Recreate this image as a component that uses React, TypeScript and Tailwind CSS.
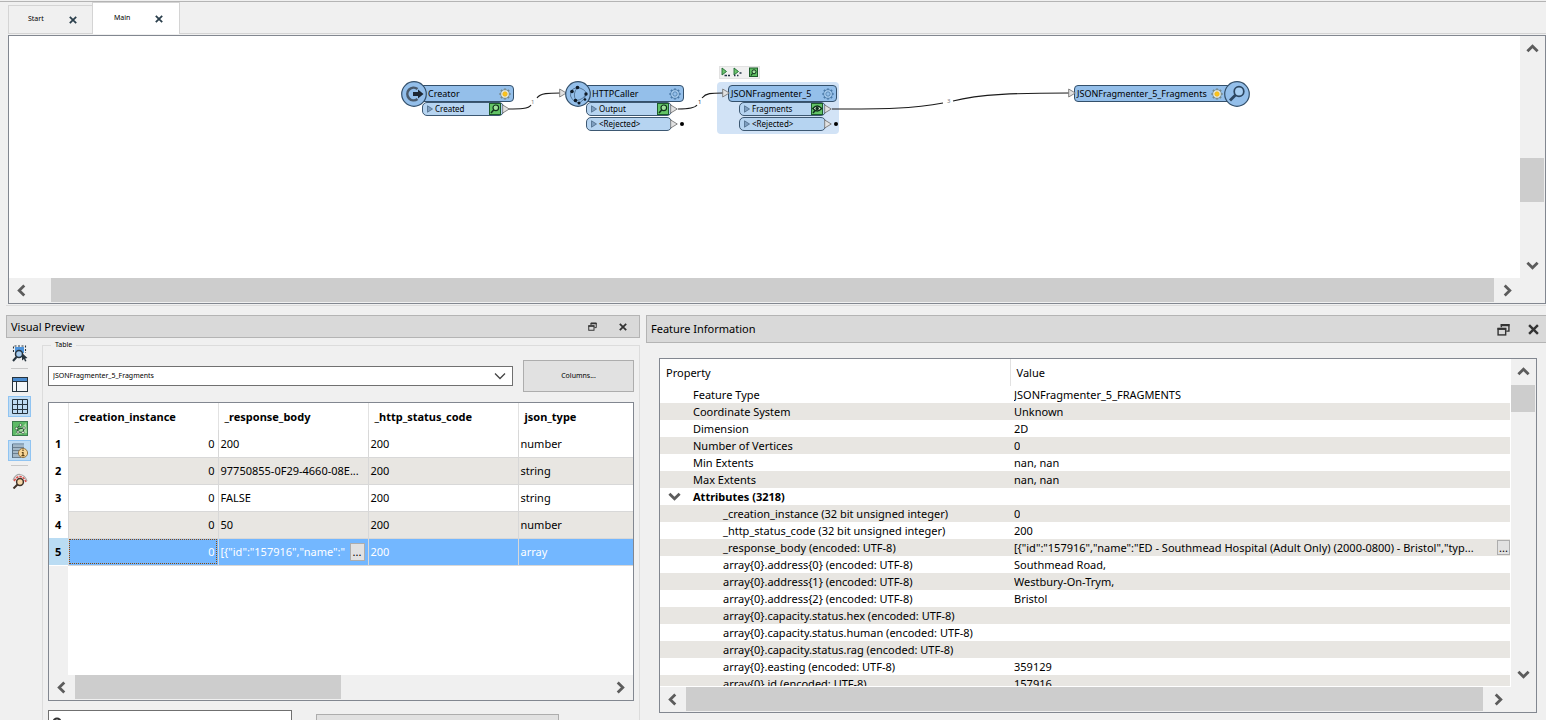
import React, { useState } from 'react';
import clsx from 'clsx';

type Direction = 'up' | 'down' | 'left' | 'right';

const chevrons: Record<Direction, string> = {
  up: 'M1.5 10 L7 4.5 L12.5 10',
  down: 'M1.5 4 L7 9.5 L12.5 4',
  left: 'M10 1.5 L4.5 7 L10 12.5',
  right: 'M4 1.5 L9.5 7 L4 12.5',
};

const Chevron: React.FC<{ direction: Direction }> = ({ direction }) => (
  <svg viewBox="0 0 14 14" className="size-[13px]" fill="none" stroke="#5c5c5c" strokeWidth="3">
    <path d={chevrons[direction]} />
  </svg>
);

const ScrollButton: React.FC<{ direction: Direction }> = ({ direction }) => (
  <button
    type="button"
    aria-label={`Scroll ${direction}`}
    className="flex size-[25px] shrink-0 items-center justify-center"
  >
    <Chevron direction={direction} />
  </button>
);

type ScrollbarProps = {
  vertical?: boolean;
  before: number;
  thumb: number;
  after: number;
};

const Scrollbar: React.FC<ScrollbarProps> = ({ vertical, before, thumb, after }) => (
  <div className={clsx('flex shrink-0 items-start bg-[#f0f0f0]', vertical ? 'w-[25px] flex-col' : 'h-[25px]')}>
    <ScrollButton direction={vertical ? 'up' : 'left'} />
    <div style={{ flexGrow: before }} />
    <div className={clsx('bg-[#cdcdcd]', vertical ? 'w-[24px]' : 'h-[24px]')} style={{ flexGrow: thumb }} />
    <div style={{ flexGrow: after }} />
    <ScrollButton direction={vertical ? 'down' : 'right'} />
  </div>
);

const CloseIcon: React.FC<{ className: string; color?: string }> = ({ className, color = '#333' }) => (
  <svg viewBox="0 0 10 10" className={className} stroke={color} strokeWidth="2.2" fill="none">
    <path d="M1 1 L9 9 M9 1 L1 9" />
  </svg>
);

const RestoreIcon: React.FC<{ className: string }> = ({ className }) => (
  <svg viewBox="0 0 12 12" className={className} stroke="#333" fill="none">
    <path d="M4 4 V1.5 H11 V7.5 H8.5" strokeWidth="1.3" />
    <path d="M3.5 2 H11.5" strokeWidth="2" />
    <rect x="1" y="5" width="7" height="6" strokeWidth="1.3" />
    <path d="M0.5 5.5 H8.5" strokeWidth="1.8" />
  </svg>
);

/* ---------- workspace canvas ---------- */

const Gear: React.FC<{ lit?: boolean }> = ({ lit }) => (
  <svg viewBox="0 0 12 12" className="size-3 shrink-0" fill="none">
    <path
      d="M6 0.4 V11.6 M0.4 6 H11.6 M2 2 L10 10 M10 2 L2 10"
      stroke={lit ? '#74888c' : '#4a7aa8'}
      strokeWidth="2.2"
    />
    <circle cx="6" cy="6" r="4.3" fill={lit ? '#e6eadf' : '#add0f1'} stroke={lit ? '#74888c' : '#4a7aa8'} strokeWidth="0.8" />
    <circle cx="6" cy="6" r="2.2" fill={lit ? '#fcc419' : '#94c0ea'} stroke={lit ? '#edb41c' : '#4a7aa8'} strokeWidth="0.8" />
  </svg>
);

const CacheIcon: React.FC<{ viewed?: boolean }> = ({ viewed }) => (
  <svg viewBox="0 0 12 12" className="size-3 shrink-0" fill="none">
    <rect x="0.5" y="0.5" width="11" height="11" fill="#63c466" stroke="#1d5b2b" />
    {viewed ? (
      <>
        <path d="M1.8 5.5 Q6.2 0.5 10.6 5.5 Q6.2 10.5 1.8 5.5 Z" fill="#dff3d8" stroke="#10301c" strokeWidth="1.3" />
        <circle cx="6.2" cy="5.5" r="1.7" fill="#10301c" />
      </>
    ) : (
      <circle cx="6.8" cy="4.8" r="2.8" fill="#9fe29a" stroke="#10301c" strokeWidth="1.2" />
    )}
    <path d="M4.6 7 L2 10" stroke="#10301c" strokeWidth="1.5" />
  </svg>
);

const InputArrow: React.FC<{ className: string }> = ({ className }) => (
  <svg viewBox="0 0 8 10" className={clsx('h-[10px] w-2', className)}>
    <path d="M0.7 1 L7.3 5 L0.7 9 Z" fill="#e2e2e2" stroke="#777" strokeWidth="0.9" />
  </svg>
);

type PortProps = { name: string; cached?: boolean; viewed?: boolean; open?: boolean };

const Port: React.FC<PortProps> = ({ name, cached, viewed, open }) => (
  <div className="relative flex h-[14px] items-center gap-[2px] rounded-[5px] border border-[#3d5872] bg-[#b6d4f1] pr-[2px] pl-1 text-[8px]">
    <svg viewBox="0 0 6 8" className="h-2 w-[6px] shrink-0">
      <path d="M0.5 0.8 L5.5 4 L0.5 7.2 Z" fill="#7f9fc0" stroke="#4c6a88" strokeWidth="0.8" />
    </svg>
    <span className="grow whitespace-nowrap">{name}</span>
    {cached ? <CacheIcon viewed={viewed} /> : null}
    <InputArrow className="absolute top-px -right-[7px]" />
    {open ? <span className="absolute top-1 -right-[13px] size-1 rounded-full bg-black" /> : null}
  </div>
);

const Badge: React.FC<{ className: string; children: React.ReactNode }> = ({ className, children }) => (
  <svg viewBox="0 0 26 26" className={clsx('absolute -top-1 size-[26px]', className)} fill="none">
    <circle cx="13" cy="13" r="12.3" fill="#94bfea" stroke="#34506b" strokeWidth="1.2" />
    {children}
  </svg>
);

type NodeProps = {
  className: string;
  titleClass: string;
  name: string;
  lit?: boolean;
  badge?: React.ReactNode;
  children?: React.ReactNode;
};

const WorkspaceNode: React.FC<NodeProps> = ({ className, titleClass, name, lit, badge, children }) => (
  <div className={clsx('absolute top-[49px]', className)}>
    <div
      className={clsx(
        'flex h-[17px] items-center justify-between rounded-[4px] border border-[#34506b] bg-[#94bfea] text-[9px] whitespace-nowrap',
        titleClass,
      )}
    >
      {name}
      <Gear lit={lit} />
    </div>
    {badge}
    {children}
  </div>
);

const Wires = () => (
  <svg className="absolute top-0 left-0 h-[140px] w-[1260px]" fill="none" stroke="#1a1a1a" strokeWidth="1.1">
    <path d="M498 73 C510 73 520 73 522 69" />
    <path d="M528 62 C531 57 540 57 552 57" />
    <path d="M669 73 C680 73 686 72 688 69" />
    <path d="M693 62 C697 57 702 57 714 57" />
    <path d="M823 73 C870 73 905 73 934 67" />
    <path d="M944 65 C970 58 1010 57 1060 57" />
    <g fill="#333" stroke="none" fontSize="6">
      <text x="522" y="68" fill="#777">1</text>
      <text x="689" y="68">1</text>
      <text x="938" y="67" fill="#777">3</text>
    </g>
  </svg>
);

const Canvas = () => (
  <div className="relative grow overflow-hidden bg-white">
    <div className="absolute top-[46px] left-[708px] h-[52px] w-[122px] rounded-[4px] bg-[#d2e3f6]" />
    <Wires />

    <div className="absolute top-[30px] left-[710px] flex h-[13px] w-[41px] items-center border border-[#e2e2e2] bg-[#f0f0f0] px-px">
      <svg viewBox="0 0 37 11" className="h-[11px] w-[37px]">
        <path d="M1 1 L5.5 4.5 L1 8 Z M13 1 L17.5 4.5 L13 8 Z" fill="#6cc46c" stroke="#1f6b33" strokeWidth="0.9" />
        <path d="M3.5 8.5 H6 M7 8.5 H9 M13 8.5 H14.5 M18.5 6 H20.5 M16 8.5 H17.5" stroke="#234" strokeWidth="1.5" />
        <rect x="28.5" y="1" width="8" height="8.5" fill="#5fbf62" stroke="#1d5b2b" />
        <circle cx="33" cy="4.8" r="2" fill="#a5e3a1" stroke="#10301c" />
        <path d="M31.5 6.5 L30 8.5" stroke="#10301c" strokeWidth="1.2" />
      </svg>
    </div>

    <WorkspaceNode
      className="left-[405px] w-[100px]"
      titleClass="pr-[2px] pl-[13px]"
      name="Creator"
      lit
      badge={
        <Badge className="-left-[13px]">
          <path d="M16.5 8 A6.3 6.3 0 1 0 16.5 18" stroke="#4a5a6b" strokeWidth="2.6" />
          <path d="M12 11 H17 V8.5 L22.5 13 L17 17.5 V15 H12 Z" fill="#1d2733" />
        </Badge>
      }
    >
      <div className="ml-[8px] w-[82px]">
        <Port name="Created" cached />
      </div>
    </WorkspaceNode>

    <WorkspaceNode
      className="left-[569px] w-[106px]"
      titleClass="pr-[2px] pl-[13px]"
      name="HTTPCaller"
      badge={
        <>
          <InputArrow className="absolute top-[3px] -left-[19px]" />
          <Badge className="-left-[13px]">
            <g stroke="#3b5875" strokeWidth="0.7">
              <path d="M8 8 L12.5 6.5 Q20 8 21.5 12.5 Q20 19 14.5 22 Q8 21 5.5 15 Q5 10 8 8 Z" />
              <path d="M12.5 6.5 Q7 13 11 19.5 M11 19.5 Q18 19 21.5 12.5" />
            </g>
            <g fill="#0f1a26">
              <circle cx="12.5" cy="6.5" r="1.8" />
              <circle cx="7" cy="10.5" r="1.8" />
              <circle cx="21" cy="13" r="1.7" />
              <circle cx="10.5" cy="19.5" r="1.8" />
              <circle cx="14" cy="22" r="1.5" />
              <circle cx="20" cy="18.5" r="1.3" />
            </g>
          </Badge>
        </>
      }
    >
      <div className="ml-[8px] flex w-[86px] flex-col gap-px">
        <Port name="Output" cached />
        <Port name="<Rejected>" open />
      </div>
    </WorkspaceNode>

    <WorkspaceNode
      className="left-[719px] w-[109px]"
      titleClass="pr-[2px] pl-[2px]"
      name="JSONFragmenter_5"
      badge={<InputArrow className="absolute top-[3px] -left-[6px]" />}
    >
      <div className="ml-[11px] flex w-[87px] flex-col gap-px">
        <Port name="Fragments" cached viewed />
        <Port name="<Rejected>" open />
      </div>
    </WorkspaceNode>

    <WorkspaceNode
      className="left-[1065px] w-[163px]"
      titleClass="pr-[13px] pl-[2px]"
      name="JSONFragmenter_5_Fragments"
      lit
      badge={
        <>
          <InputArrow className="absolute top-[3px] -left-[6px]" />
          <Badge className="-right-[13px]">
            <circle cx="15" cy="10.5" r="4.8" fill="#a9cff2" stroke="#2c4661" strokeWidth="1.7" />
            <path d="M11.5 14 L6 19.5" stroke="#2c4661" strokeWidth="2.8" />
          </Badge>
        </>
      }
    />
  </div>
);

/* ---------- visual preview ---------- */

const PreviewToolbar = () => (
  <div className="flex w-[36px] shrink-0 flex-col items-start pt-1 pl-[2px]">
    <button type="button" aria-label="Select features" className="flex h-[22px] w-[23px] items-center justify-center">
      <svg viewBox="0 0 16 17" className="h-[17px] w-4" fill="none">
        <rect x="3" y="2" width="9" height="6" fill="#4f95dc" />
        <path d="M1.5 7 V1 H13.5 V8" stroke="#26333d" strokeWidth="1.1" strokeDasharray="2 1.5" />
        <circle cx="7" cy="9" r="3.5" fill="#a7cdf1" stroke="#26333d" strokeWidth="1.5" />
        <path d="M4.5 12 L1 16" stroke="#26333d" strokeWidth="2" />
        <path d="M10 8 L15.5 13 L13.2 13.4 L14.5 16 L13 16.5 L12 14 L10 15.5 Z" fill="#26333d" />
      </svg>
    </button>
    <div className="my-1 ml-[3px] h-px w-[17px] bg-[#c8c8c8]" />
    <button type="button" aria-label="Toggle display" className="flex h-[23px] w-[23px] items-center justify-center">
      <svg viewBox="0 0 16 15" className="h-[15px] w-4" fill="none" stroke="#26333d">
        <rect x="0.5" y="0.5" width="15" height="14" fill="#f3f6f8" />
        <path d="M1 2.5 H15" stroke="#4a8cd0" strokeWidth="3" />
        <path d="M0.5 4.5 H15.5 M4.5 4.5 V14.5" />
      </svg>
    </button>
    <button type="button" aria-label="Table view" className="flex h-[21px] w-[23px] items-center justify-center border border-[#90c4f2] bg-[#c0dcf3]">
      <svg viewBox="0 0 16 15" className="h-[15px] w-4" fill="none" stroke="#26333d">
        <path d="M0.5 0.5 H15.5 V14.5 H0.5 Z M0.5 5.5 H15.5 M0.5 10.5 H15.5 M5.5 0.5 V14.5 M10.5 0.5 V14.5" />
      </svg>
    </button>
    <button type="button" aria-label="Graphics view" className="flex h-[23px] w-[23px] items-center justify-center">
      <svg viewBox="0 0 16 15" className="h-[15px] w-4" fill="none">
        <rect x="0.5" y="0.5" width="15" height="14" fill="#5dba66" stroke="#3b7a4c" />
        <path d="M3 13.5 L15 12 L14 2 Z" fill="#a4dea0" />
        <path d="M5 7 L8.5 4 M5 7 L6 11 L11 11.5 L12 7 L6 8" stroke="#234a33" />
        <g fill="#f5f5e8" stroke="#234a33" strokeWidth="0.6">
          <circle cx="4.5" cy="7.5" r="1.3" />
          <circle cx="8.5" cy="4" r="1.3" />
          <circle cx="12" cy="7" r="1.3" />
          <circle cx="11" cy="11.5" r="1.3" />
          <circle cx="6" cy="11" r="1.3" />
        </g>
      </svg>
    </button>
    <button type="button" aria-label="Feature information" className="flex h-[21px] w-[23px] items-center justify-center border border-[#90c4f2] bg-[#c0dcf3]">
      <svg viewBox="0 0 16 16" className="size-4" fill="none">
        <path d="M0.5 15 V1 H12" stroke="#5a7184" />
        <path d="M1 2 H12 V14 H1 Z" fill="#a3b7c6" />
        <path d="M1 4.5 H12 M1 7.5 H12 M1 10.5 H12 M1 14.5 H9" stroke="#6b7f90" />
        <circle cx="11" cy="10" r="4.6" fill="#f8d596" stroke="#8a6c3c" strokeWidth="0.9" />
        <path d="M11 9 V13 M11 6.5 V8 M9.8 9.5 H11 M9.5 12.7 H12.5" stroke="#5a3f12" strokeWidth="1.2" />
      </svg>
    </button>
    <div className="my-1 ml-[3px] h-px w-[17px] bg-[#c8c8c8]" />
    <button type="button" aria-label="Inspect" className="flex h-[22px] w-[23px] items-center justify-center">
      <svg viewBox="0 0 16 16" className="size-4" fill="none">
        <path d="M1 7 Q4 1 8 1.5 Q13 2 15 8" stroke="#a8a8a8" strokeWidth="1.2" />
        <path d="M2 8 Q5 3.5 8 3.5 Q12 4 14 9" stroke="#d9534f" strokeWidth="1.6" strokeDasharray="2.5 1" />
        <circle cx="8" cy="9" r="3.4" fill="#f6d7a8" stroke="#40332a" strokeWidth="1.5" />
        <path d="M5.5 11.5 L1.5 15.5" stroke="#40332a" strokeWidth="2" />
      </svg>
    </button>
  </div>
);

const previewColumns = ['_creation_instance', '_response_body', '_http_status_code', 'json_type'];

const previewRows = [
  ['0', '200', '200', 'number'],
  ['0', '97750855-0F29-4660-08E...', '200', 'string'],
  ['0', 'FALSE', '200', 'string'],
  ['0', '50', '200', 'number'],
  ['0', '[{"id":"157916","name":"', '200', 'array'],
];

const PreviewTable = () => {
  const [selected, setSelected] = useState(4);

  return (
    <div className="mt-[10px] flex h-[299px] flex-col border border-[#828790] bg-white">
      <div className="flex grow flex-col overflow-hidden">
        <table className="w-full table-fixed border-collapse text-[11px]">
          <colgroup>
            <col className="w-[19px]" />
            <col className="w-[150px]" />
            <col className="w-[150px]" />
            <col className="w-[150px]" />
            <col />
          </colgroup>
          <thead>
            <tr className="h-[27px]">
              <th className="p-0" />
              {previewColumns.map((column) => (
                <th key={column} className="border-l border-[#e2e2e2] p-0 pt-px pl-[6px] text-left font-bold">
                  {column}
                </th>
              ))}
            </tr>
          </thead>
          <tbody>
            {previewRows.map((row, i) => {
              const active = i === selected;
              return (
                <tr
                  key={i}
                  onClick={() => setSelected(i)}
                  className={clsx('h-[27px]', active ? 'bg-[#73b7ff] text-white' : i % 2 === 1 && 'bg-[#e8e6e2]')}
                >
                  <th className={clsx('p-0 pt-px text-center font-bold text-black', active ? 'bg-[#badcf3]' : 'bg-white')}>
                    {i + 1}
                  </th>
                  {row.map((cell, j) => (
                    <td
                      key={j}
                      className={clsx(
                        'overflow-hidden border-b border-l border-[#d8d8d8] p-0 pt-px whitespace-nowrap',
                        j === 0 ? 'pr-[3px] text-right' : 'pl-[2px]',
                        active && j === 0 && 'outline-1 -outline-offset-2 outline-[#8a4b10] outline-dotted',
                      )}
                    >
                      {active && j === 1 ? (
                        <div className="flex items-center justify-between pr-[3px]">
                          <span>{cell}</span>
                          <button
                            type="button"
                            className="flex h-[18px] w-[15px] shrink-0 items-center justify-center border border-[#adadad] bg-[#e1e1e1] text-black"
                          >
                            ...
                          </button>
                        </div>
                      ) : (
                        cell
                      )}
                    </td>
                  ))}
                </tr>
              );
            })}
          </tbody>
        </table>
        <div className="w-[19px] grow bg-[#f0f0f0]" />
      </div>
      <Scrollbar before={1} thumb={266} after={267} />
    </div>
  );
};

const VisualPreview = () => (
  <section className="flex min-w-0 flex-col">
    <header className="flex h-[23px] shrink-0 items-center border border-[#b4b4b4] bg-[#d9d9d9] pl-1 text-[11px]">
      <h2 className="grow pt-px">Visual Preview</h2>
      <button type="button" aria-label="Float" className="mr-[22px]">
        <RestoreIcon className="size-[9px]" />
      </button>
      <button type="button" aria-label="Close" className="mr-[12px]">
        <CloseIcon className="size-2" />
      </button>
    </header>
    <div className="flex">
      <PreviewToolbar />
      <fieldset className="mt-px h-[420px] min-w-0 grow border border-[#dcdcdc] px-[5px]">
        <legend className="ml-[3px] px-1 text-[7px] leading-[12px]">Table</legend>
        <div className="flex items-center gap-[10px] pt-[9px] text-[7px]">
          <div className="relative grow">
            <select
              aria-label="Table"
              className="block h-5 w-full appearance-none border border-[#707070] bg-white pl-1"
            >
              <option>JSONFragmenter_5_Fragments</option>
            </select>
            <svg viewBox="0 0 12 8" className="pointer-events-none absolute top-[6px] right-[7px] h-2 w-3" fill="none" stroke="#444" strokeWidth="1.3">
              <path d="M1 1.5 L6 6.5 L11 1.5" />
            </svg>
          </div>
          <button type="button" className="h-8 w-[111px] border border-[#adadad] bg-[#e1e1e1]">
            Columns...
          </button>
        </div>
        <PreviewTable />
        <div className="mt-[9px] flex gap-6">
          <div className="relative">
            <input aria-label="Search" className="block h-[24px] w-[244px] border border-[#707070] bg-white pl-5 text-[7px]" />
            <svg viewBox="0 0 12 12" className="absolute top-[7px] left-1 size-3" fill="none" stroke="#333" strokeWidth="2">
              <circle cx="5" cy="5" r="3.5" />
              <path d="M7.5 7.5 L11 11" />
            </svg>
          </div>
          <button type="button" aria-label="Search options" className="mt-1 h-6 w-[243px] border border-[#adadad] bg-[#e1e1e1]" />
        </div>
      </fieldset>
    </div>
  </section>
);

/* ---------- feature information ---------- */

type PropertyRow = { name: string; value?: string; kind?: 'group' | 'attribute'; more?: boolean };

const properties: PropertyRow[] = [
  { name: 'Feature Type', value: 'JSONFragmenter_5_FRAGMENTS' },
  { name: 'Coordinate System', value: 'Unknown' },
  { name: 'Dimension', value: '2D' },
  { name: 'Number of Vertices', value: '0' },
  { name: 'Min Extents', value: 'nan, nan' },
  { name: 'Max Extents', value: 'nan, nan' },
  { name: 'Attributes (3218)', kind: 'group' },
  { name: '_creation_instance (32 bit unsigned integer)', value: '0', kind: 'attribute' },
  { name: '_http_status_code (32 bit unsigned integer)', value: '200', kind: 'attribute' },
  {
    name: '_response_body (encoded: UTF-8)',
    value: '[{"id":"157916","name":"ED - Southmead Hospital (Adult Only) (2000-0800) - Bristol","typ...',
    kind: 'attribute',
    more: true,
  },
  { name: 'array{0}.address{0} (encoded: UTF-8)', value: 'Southmead Road,', kind: 'attribute' },
  { name: 'array{0}.address{1} (encoded: UTF-8)', value: 'Westbury-On-Trym,', kind: 'attribute' },
  { name: 'array{0}.address{2} (encoded: UTF-8)', value: 'Bristol', kind: 'attribute' },
  { name: 'array{0}.capacity.status.hex (encoded: UTF-8)', kind: 'attribute' },
  { name: 'array{0}.capacity.status.human (encoded: UTF-8)', kind: 'attribute' },
  { name: 'array{0}.capacity.status.rag (encoded: UTF-8)', kind: 'attribute' },
  { name: 'array{0}.easting (encoded: UTF-8)', value: '359129', kind: 'attribute' },
  { name: 'array{0}.id (encoded: UTF-8)', value: '157916', kind: 'attribute' },
];

const FeatureInformation = () => {
  const [expanded, setExpanded] = useState(true);
  const rows = expanded ? properties : properties.filter((row) => row.kind !== 'attribute');

  return (
    <section className="flex min-h-0 min-w-0 flex-col">
      <header className="flex h-[28px] shrink-0 items-center border border-r-0 border-[#b4b4b4] bg-[#d9d9d9] pl-1 text-[11px]">
        <h2 className="grow pt-px">Feature Information</h2>
        <button type="button" aria-label="Float" className="mr-[18px]">
          <RestoreIcon className="size-[13px]" />
        </button>
        <button type="button" aria-label="Close" className="mr-[7px]">
          <CloseIcon className="size-[11px]" />
        </button>
      </header>

      <div className="mt-[15px] mr-[9px] mb-[7px] ml-[13px] flex min-h-0 grow flex-col border border-[#828790] bg-white">
        <div className="flex min-h-0 grow">
          <div className="mr-px mb-px min-w-0 grow overflow-hidden">
            <table className="w-full table-fixed border-collapse text-[11px] leading-[17px]">
              <colgroup>
                <col className="w-[350px]" />
                <col />
              </colgroup>
              <thead>
                <tr className="h-[27px]">
                  <th className="p-0 pl-[6px] text-left font-normal">Property</th>
                  <th className="border-l border-[#e2e2e2] p-0 pl-[6px] text-left font-normal">Value</th>
                </tr>
              </thead>
              <tbody>
                {rows.map((row, i) => (
                  <tr key={row.name} className={clsx('h-[17px]', i % 2 === 1 && 'bg-[#e8e6e2]')}>
                    <td
                      className={clsx(
                        'p-0 whitespace-nowrap',
                        row.kind === 'attribute' && 'pl-[63px]',
                        row.kind === undefined && 'pl-[33px]',
                      )}
                    >
                      {row.kind === 'group' ? (
                        <button
                          type="button"
                          aria-expanded={expanded}
                          onClick={() => setExpanded(!expanded)}
                          className="flex h-[17px] items-center gap-3 pl-2 font-bold"
                        >
                          <Chevron direction={expanded ? 'down' : 'right'} />
                          {row.name}
                        </button>
                      ) : (
                        row.name
                      )}
                    </td>
                    <td className="p-0 pl-1">
                      <div className="flex h-[17px] items-center justify-between">
                        <span className="truncate">{row.value}</span>
                        {row.more ? (
                          <button
                            type="button"
                            className="h-[15px] w-[13px] shrink-0 border border-[#adadad] bg-[#e1e1e1] leading-[11px]"
                          >
                            ...
                          </button>
                        ) : null}
                      </div>
                    </td>
                  </tr>
                ))}
              </tbody>
            </table>
          </div>
          <Scrollbar vertical before={1} thumb={27} after={248} />
        </div>
        <div className="flex bg-[#f0f0f0]">
          <div className="flex grow flex-col">
            <Scrollbar before={1} thumb={796} after={3} />
          </div>
          <div className="w-[25px]" />
        </div>
      </div>
    </section>
  );
};

/* ---------- main window ---------- */

export default function App() {
  return (
    <div className="flex h-screen flex-col overflow-hidden border-t border-[#f0f0f0] bg-[#f0f0f0] font-['Noto_Sans',sans-serif] text-black">
      <nav className="flex h-[33px] shrink-0 items-end border-t border-[#b4b4b4] pl-2 text-[7px]">
        <div className="flex h-[29px] w-[84px] items-center justify-between border border-r-0 border-[#d4d4d4] pr-[15px] pl-[19px]">
          <button type="button">Start</button>
          <button type="button" aria-label="Close Start">
            <CloseIcon className="size-2" color="#2b3f4c" />
          </button>
        </div>
        <div className="flex h-[32px] w-[88px] items-center justify-between border border-b-0 border-[#d4d4d4] bg-white pr-[16px] pl-[21px]">
          <button type="button">Main</button>
          <button type="button" aria-label="Close Main">
            <CloseIcon className="size-2" color="#2b3f4c" />
          </button>
        </div>
        <div className="h-px grow bg-[#d4d4d4]" />
      </nav>

      <main className="mt-px ml-2 flex h-[269px] shrink-0 flex-col border border-[#828790] bg-white">
        <div className="flex min-h-0 grow">
          <Canvas />
          <Scrollbar vertical before={97} thumb={44} after={51} />
        </div>
        <div className="flex bg-[#f0f0f0]">
          <div className="flex grow flex-col">
            <Scrollbar before={17} thumb={1442} after={1} />
          </div>
          <div className="w-[25px]" />
        </div>
      </main>

      <div className="mt-px ml-[6px] h-px shrink-0 bg-[#dcdcdc]" />

      <div className="mt-[9px] grid min-h-0 grow grid-cols-[634fr_900fr] grid-rows-1 gap-[6px] pl-[6px]">
        <VisualPreview />
        <FeatureInformation />
      </div>
    </div>
  );
}
